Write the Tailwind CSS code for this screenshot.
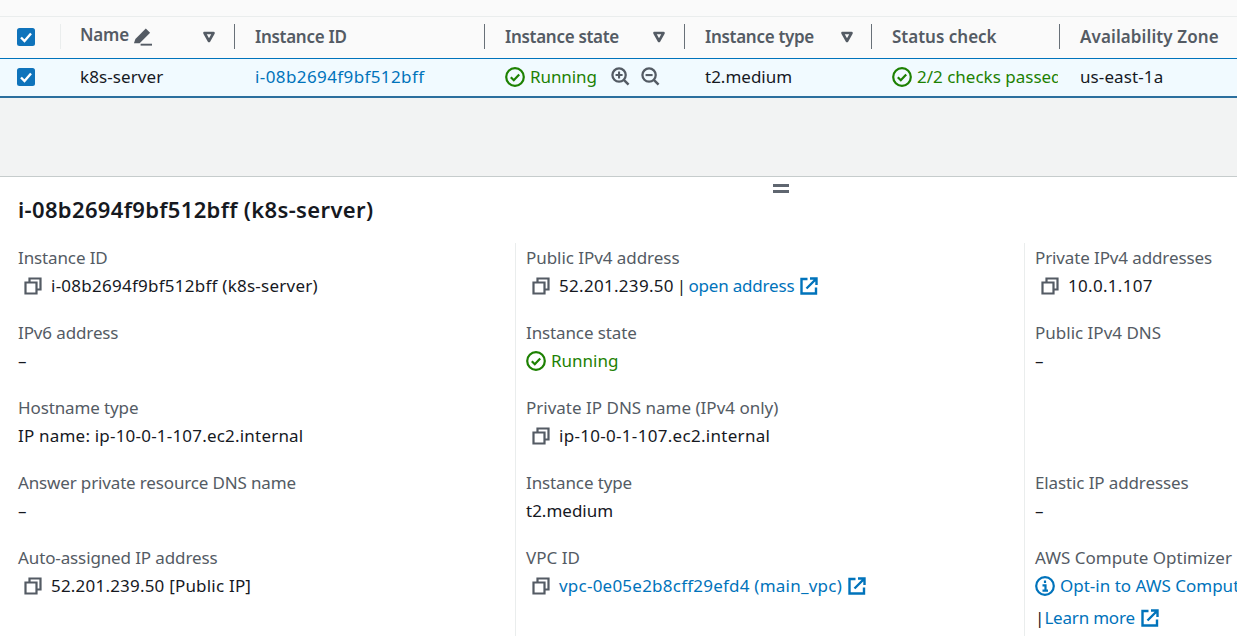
<!DOCTYPE html>
<html><head><meta charset="utf-8"><title>Instance</title>
<script src="https://cdn.jsdelivr.net/npm/@tailwindcss/browser@4"></script>
</head>
<body class="w-[1237px] h-[637px] overflow-hidden bg-white font-['Noto_Sans',sans-serif] text-[17px] leading-[22px] text-[#16191f]">
<svg class="hidden"><defs>
<symbol id="copy" viewBox="0 0 18 18"><path d="M5.5 5.5V1.5H16.5V12.5H12.5M1.5 5.5H12.5V16.5H1.5Z" fill="none" stroke="currentColor" stroke-width="2.2"/></symbol>
<symbol id="ext" viewBox="0 0 18 18"><path d="M7.5 2H1.5V16.5H16V10.5" fill="none" stroke="currentColor" stroke-width="2.4"/><path d="M6.5 11.5L15.5 2.5M10 1.5H16.5V8" fill="none" stroke="currentColor" stroke-width="2.4"/></symbol>
<symbol id="ok" viewBox="0 0 20 20"><circle cx="10" cy="10" r="8.8" fill="none" stroke="currentColor" stroke-width="2.2"/><path d="M5.8 10.2L8.8 13.2L14.2 7.4" fill="none" stroke="currentColor" stroke-width="2.2"/></symbol>
<symbol id="chk" viewBox="0 0 18 18"><rect width="18" height="18" rx="2.5" fill="#0f73bb"/><path d="M4 9.5L7.5 13L14 5.5" fill="none" stroke="#fff" stroke-width="2.4"/></symbol>
<symbol id="tri" viewBox="0 0 14 12"><path d="M2.5 2H11.5L7 10Z" fill="none" stroke="currentColor" stroke-width="2.6" stroke-linejoin="round"/></symbol>
</defs></svg>

<div class="h-[17px] bg-[#fafafa] border-b border-[#eaeded]"></div>

<!-- Table header -->
<div class="h-[41px] pb-[2px] flex items-center font-semibold text-[#545b64] bg-[#fafafa]">
  <div class="w-[61px] h-[25px] flex items-center pl-[17px] border-r border-[#eaeded]"><svg class="w-[18px] h-[18px]"><use href="#chk"/></svg></div>
  <div class="w-[174px] h-[25px] flex items-center pl-[19px] border-r border-[#687078] pr-[18px]">
    <span class="-mt-[3px] tracking-[-0.2px]">Name</span>
    <svg class="ml-[4px] w-[19px] h-[19px] text-[#545b64]" viewBox="0 0 20 20"><path d="M1 17L2.5 12.5L13.5 1.5L18 6L7 17Z" fill="currentColor"/><path d="M8 18.6H20" stroke="currentColor" stroke-width="2"/></svg>
    <svg class="ml-auto w-[14px] h-[12px]"><use href="#tri"/></svg>
  </div>
  <div class="w-[250px] h-[25px] flex items-center pl-[20px] border-r border-[#687078] tracking-[-0.3px]">Instance ID</div>
  <div class="w-[200px] h-[25px] flex items-center pl-[20px] pr-[18px] border-r border-[#687078] tracking-[-0.3px]">Instance state<svg class="ml-auto w-[14px] h-[12px]"><use href="#tri"/></svg></div>
  <div class="w-[187px] h-[25px] flex items-center pl-[20px] pr-[17px] border-r border-[#687078] tracking-[-0.3px]">Instance type<svg class="ml-auto w-[14px] h-[12px]"><use href="#tri"/></svg></div>
  <div class="w-[188px] h-[25px] flex items-center pl-[20px] border-r border-[#687078]">Status check</div>
  <div class="pl-[20px] whitespace-nowrap tracking-[0.1px]">Availability Zone</div>
</div>

<!-- Selected row -->
<div class="h-[40px] pb-[2px] flex items-center bg-[#f1faff] border-t border-t-[#0073bb] border-b-2 border-b-[#2b6f9e]">
  <div class="w-[61px] flex pl-[17px]"><svg class="w-[18px] h-[18px]"><use href="#chk"/></svg></div>
  <div class="w-[174px] pl-[19px] tracking-[0.1px]">k8s-server</div>
  <div class="w-[250px] pl-[20px] text-[#0073bb] tracking-[0.4px]">i-08b2694f9bf512bff</div>
  <div class="w-[200px] pl-[20px] flex items-center">
    <svg class="w-[20px] h-[20px] text-[#1d8102] shrink-0"><use href="#ok"/></svg>
    <span class="ml-[5px] text-[#1d8102] tracking-[-0.1px]">Running</span>
    <svg class="ml-[14px] w-[19px] h-[19px] text-[#545b64]" viewBox="0 0 20 20"><circle cx="8.5" cy="8.5" r="7" fill="none" stroke="currentColor" stroke-width="2.4"/><path d="M13.5 13.5L18.5 18.5" stroke="currentColor" stroke-width="2.6"/><path d="M4.8 8.5H12.2M8.5 4.8V12.2" stroke="currentColor" stroke-width="2.2"/></svg>
    <svg class="ml-[11px] w-[19px] h-[19px] text-[#545b64]" viewBox="0 0 20 20"><circle cx="8.5" cy="8.5" r="7" fill="none" stroke="currentColor" stroke-width="2.4"/><path d="M13.5 13.5L18.5 18.5" stroke="currentColor" stroke-width="2.6"/><path d="M4.8 8.5H12.2" stroke="currentColor" stroke-width="2.2"/></svg>
  </div>
  <div class="w-[187px] pl-[20px]">t2.medium</div>
  <div class="w-[186px] mr-[2px] pl-[20px] flex items-center overflow-hidden">
    <svg class="w-[20px] h-[20px] text-[#1d8102] shrink-0"><use href="#ok"/></svg>
    <span class="ml-[5px] text-[#1d8102] whitespace-nowrap">2/2 checks passed</span>
  </div>
  <div class="pl-[20px] tracking-[0.1px]">us-east-1a</div>
</div>

<div class="h-[79px] bg-[#f2f3f3] border-b border-[#c6cccc]"></div>

<!-- Drag handle -->
<div class="h-[7px] pt-[7px] flex flex-col items-center gap-[3px] pl-[325px]">
  <div class="w-[16px] h-[3px] bg-[#5f6670] shrink-0"></div>
  <div class="w-[16px] h-[3px] bg-[#5f6670] shrink-0"></div>
</div>

<div class="pl-[18px] pt-[12px] pb-[21px] text-[22px] leading-[26px] font-semibold tracking-[0.35px]">i-08b2694f9bf512bff (k8s-server)</div>

<!-- Details -->
<div class="grid grid-cols-[515px_509px_1fr] text-[#16191f]">
  <div class="pl-[18px] pt-[4px]">
    <div class="h-[75px]"><div class="text-[#545b64] h-[28px] tracking-[-0.12px]">Instance ID</div><div class="flex items-center pl-[6px] tracking-[0.25px]"><svg class="w-[18px] h-[18px] shrink-0 text-[#545b64] mr-[9px]"><use href="#copy"/></svg>i-08b2694f9bf512bff (k8s-server)</div></div>
    <div class="h-[75px]"><div class="text-[#545b64] h-[28px] tracking-[-0.12px]">IPv6 address</div><div>–</div></div>
    <div class="h-[75px]"><div class="text-[#545b64] h-[28px] tracking-[-0.12px]">Hostname type</div><div class="tracking-[0.2px]">IP name: ip-10-0-1-107.ec2.internal</div></div>
    <div class="h-[75px]"><div class="text-[#545b64] h-[28px] tracking-[-0.15px]">Answer private resource DNS name</div><div>–</div></div>
    <div class="h-[75px]"><div class="text-[#545b64] h-[28px] tracking-[-0.12px]">Auto-assigned IP address</div><div class="flex items-center pl-[6px] tracking-[0.2px]"><svg class="w-[18px] h-[18px] shrink-0 text-[#545b64] mr-[9px]"><use href="#copy"/></svg>52.201.239.50 [Public IP]</div></div>
  </div>
  <div class="border-l border-[#eaeded] pl-[10px] pt-[4px] h-[393px]">
    <div class="h-[75px]"><div class="text-[#545b64] h-[28px] tracking-[-0.05px]">Public IPv4 address</div><div class="flex items-center pl-[6px] tracking-[0.3px]"><svg class="w-[18px] h-[18px] shrink-0 text-[#545b64] mr-[9px]"><use href="#copy"/></svg><span>52.201.239.50</span><span class="ml-[3px]">|</span><span class="ml-[2px] text-[#0073bb] tracking-[-0.2px]">open address</span><svg class="ml-[6px] w-[18px] h-[18px] shrink-0 text-[#0073bb]"><use href="#ext"/></svg></div></div>
    <div class="h-[75px]"><div class="text-[#545b64] h-[28px] tracking-[-0.12px]">Instance state</div><div class="flex items-center text-[#1d8102]"><svg class="w-[20px] h-[20px] shrink-0 mr-[5px]"><use href="#ok"/></svg>Running</div></div>
    <div class="h-[75px]"><div class="text-[#545b64] h-[28px]">Private IP DNS name (IPv4 only)</div><div class="flex items-center pl-[6px] tracking-[0.3px]"><svg class="w-[18px] h-[18px] shrink-0 text-[#545b64] mr-[9px]"><use href="#copy"/></svg>ip-10-0-1-107.ec2.internal</div></div>
    <div class="h-[75px]"><div class="text-[#545b64] h-[28px] tracking-[-0.12px]">Instance type</div><div>t2.medium</div></div>
    <div class="h-[75px]"><div class="text-[#545b64] h-[28px]">VPC ID</div><div class="flex items-center pl-[6px]"><svg class="w-[18px] h-[18px] shrink-0 text-[#545b64] mr-[9px]"><use href="#copy"/></svg><span class="text-[#0073bb] tracking-[0.23px]">vpc-0e05e2b8cff29efd4 (main_vpc)</span><svg class="ml-[6px] w-[18px] h-[18px] shrink-0 text-[#0073bb]"><use href="#ext"/></svg></div></div>
  </div>
  <div class="border-l border-[#eaeded] pl-[10px] pt-[4px] whitespace-nowrap overflow-hidden">
    <div class="h-[75px]"><div class="text-[#545b64] h-[28px] tracking-[-0.12px]">Private IPv4 addresses</div><div class="flex items-center pl-[6px] tracking-[0.3px]"><svg class="w-[18px] h-[18px] shrink-0 text-[#545b64] mr-[9px]"><use href="#copy"/></svg>10.0.1.107</div></div>
    <div class="h-[150px]"><div class="text-[#545b64] h-[28px]">Public IPv4 DNS</div><div>–</div></div>
    <div class="h-[75px]"><div class="text-[#545b64] h-[28px] tracking-[-0.12px]">Elastic IP addresses</div><div>–</div></div>
    <div><div class="text-[#545b64] h-[28px]">AWS Compute Optimizer</div><div class="flex items-center text-[#0073bb]"><svg class="w-[20px] h-[20px] shrink-0 mr-[5px]" viewBox="0 0 20 20"><circle cx="10" cy="10" r="8.8" fill="none" stroke="currentColor" stroke-width="2.2"/><path d="M10 4.5V7M7.5 9.3H10.5V14M7.5 14.6H13" fill="none" stroke="currentColor" stroke-width="2.2"/></svg>Opt-in to AWS Compute Optimizer</div>
    <div class="mt-[10px] flex items-center"><span>|</span><span class="text-[#0073bb] tracking-[-0.2px]">Learn more</span><svg class="ml-[6px] w-[18px] h-[18px] shrink-0 text-[#0073bb]"><use href="#ext"/></svg></div></div>
  </div>
</div>
</body></html>
